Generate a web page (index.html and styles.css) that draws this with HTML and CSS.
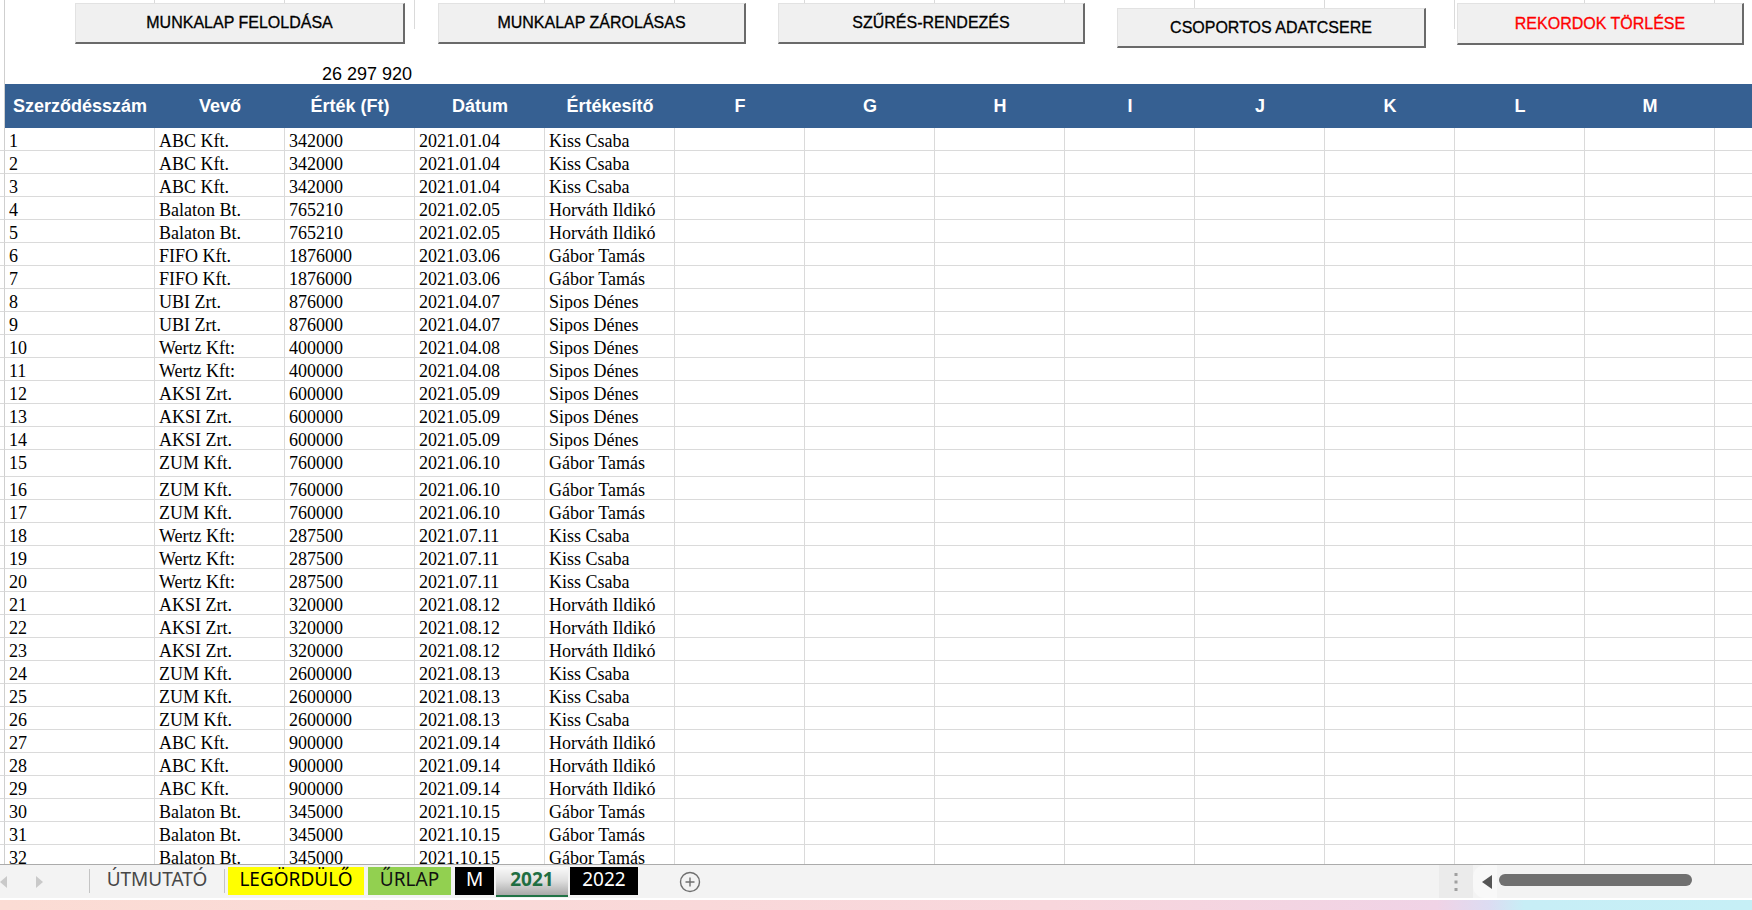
FILE: index.html
```html
<!DOCTYPE html>
<html>
  <head>
    <meta charset="UTF-8">
    <title>2021 - Szerződések</title>
    <link rel="stylesheet" href="styles.css">
  </head>
  <body>
    <div class="sheet">
      <!-- rows above the table -->
      <div class="top-row"><span class="gut"></span><span></span><span class="lines"></span></div>
      <div class="blank-row"><span class="gut"></span></div>
      <div class="sum-row"><span class="gut"></span><span></span><span></span><span class="sum">26 297 920</span></div>

      <div class="head">
        <span class="gut"></span>
        <span>Szerződésszám</span><span>Vevő</span><span>Érték (Ft)</span><span>Dátum</span><span>Értékesítő</span>
        <span>F</span><span>G</span><span>H</span><span>I</span><span>J</span><span>K</span><span>L</span><span>M</span><span></span>
      </div>

      <div class="row"><span class="gut"></span><span>1</span><span>ABC Kft.</span><span>342000</span><span>2021.01.04</span><span>Kiss Csaba</span><span class="rest"></span></div>
      <div class="row"><span class="gut"></span><span>2</span><span>ABC Kft.</span><span>342000</span><span>2021.01.04</span><span>Kiss Csaba</span><span class="rest"></span></div>
      <div class="row"><span class="gut"></span><span>3</span><span>ABC Kft.</span><span>342000</span><span>2021.01.04</span><span>Kiss Csaba</span><span class="rest"></span></div>
      <div class="row"><span class="gut"></span><span>4</span><span>Balaton Bt.</span><span>765210</span><span>2021.02.05</span><span>Horváth Ildikó</span><span class="rest"></span></div>
      <div class="row"><span class="gut"></span><span>5</span><span>Balaton Bt.</span><span>765210</span><span>2021.02.05</span><span>Horváth Ildikó</span><span class="rest"></span></div>
      <div class="row"><span class="gut"></span><span>6</span><span>FIFO Kft.</span><span>1876000</span><span>2021.03.06</span><span>Gábor Tamás</span><span class="rest"></span></div>
      <div class="row"><span class="gut"></span><span>7</span><span>FIFO Kft.</span><span>1876000</span><span>2021.03.06</span><span>Gábor Tamás</span><span class="rest"></span></div>
      <div class="row"><span class="gut"></span><span>8</span><span>UBI Zrt.</span><span>876000</span><span>2021.04.07</span><span>Sipos Dénes</span><span class="rest"></span></div>
      <div class="row"><span class="gut"></span><span>9</span><span>UBI Zrt.</span><span>876000</span><span>2021.04.07</span><span>Sipos Dénes</span><span class="rest"></span></div>
      <div class="row"><span class="gut"></span><span>10</span><span>Wertz Kft:</span><span>400000</span><span>2021.04.08</span><span>Sipos Dénes</span><span class="rest"></span></div>
      <div class="row"><span class="gut"></span><span>11</span><span>Wertz Kft:</span><span>400000</span><span>2021.04.08</span><span>Sipos Dénes</span><span class="rest"></span></div>
      <div class="row"><span class="gut"></span><span>12</span><span>AKSI Zrt.</span><span>600000</span><span>2021.05.09</span><span>Sipos Dénes</span><span class="rest"></span></div>
      <div class="row"><span class="gut"></span><span>13</span><span>AKSI Zrt.</span><span>600000</span><span>2021.05.09</span><span>Sipos Dénes</span><span class="rest"></span></div>
      <div class="row"><span class="gut"></span><span>14</span><span>AKSI Zrt.</span><span>600000</span><span>2021.05.09</span><span>Sipos Dénes</span><span class="rest"></span></div>
      <div class="row tall"><span class="gut"></span><span>15</span><span>ZUM Kft.</span><span>760000</span><span>2021.06.10</span><span>Gábor Tamás</span><span class="rest"></span></div>
      <div class="row"><span class="gut"></span><span>16</span><span>ZUM Kft.</span><span>760000</span><span>2021.06.10</span><span>Gábor Tamás</span><span class="rest"></span></div>
      <div class="row"><span class="gut"></span><span>17</span><span>ZUM Kft.</span><span>760000</span><span>2021.06.10</span><span>Gábor Tamás</span><span class="rest"></span></div>
      <div class="row"><span class="gut"></span><span>18</span><span>Wertz Kft:</span><span>287500</span><span>2021.07.11</span><span>Kiss Csaba</span><span class="rest"></span></div>
      <div class="row"><span class="gut"></span><span>19</span><span>Wertz Kft:</span><span>287500</span><span>2021.07.11</span><span>Kiss Csaba</span><span class="rest"></span></div>
      <div class="row"><span class="gut"></span><span>20</span><span>Wertz Kft:</span><span>287500</span><span>2021.07.11</span><span>Kiss Csaba</span><span class="rest"></span></div>
      <div class="row"><span class="gut"></span><span>21</span><span>AKSI Zrt.</span><span>320000</span><span>2021.08.12</span><span>Horváth Ildikó</span><span class="rest"></span></div>
      <div class="row"><span class="gut"></span><span>22</span><span>AKSI Zrt.</span><span>320000</span><span>2021.08.12</span><span>Horváth Ildikó</span><span class="rest"></span></div>
      <div class="row"><span class="gut"></span><span>23</span><span>AKSI Zrt.</span><span>320000</span><span>2021.08.12</span><span>Horváth Ildikó</span><span class="rest"></span></div>
      <div class="row"><span class="gut"></span><span>24</span><span>ZUM Kft.</span><span>2600000</span><span>2021.08.13</span><span>Kiss Csaba</span><span class="rest"></span></div>
      <div class="row"><span class="gut"></span><span>25</span><span>ZUM Kft.</span><span>2600000</span><span>2021.08.13</span><span>Kiss Csaba</span><span class="rest"></span></div>
      <div class="row"><span class="gut"></span><span>26</span><span>ZUM Kft.</span><span>2600000</span><span>2021.08.13</span><span>Kiss Csaba</span><span class="rest"></span></div>
      <div class="row"><span class="gut"></span><span>27</span><span>ABC Kft.</span><span>900000</span><span>2021.09.14</span><span>Horváth Ildikó</span><span class="rest"></span></div>
      <div class="row"><span class="gut"></span><span>28</span><span>ABC Kft.</span><span>900000</span><span>2021.09.14</span><span>Horváth Ildikó</span><span class="rest"></span></div>
      <div class="row"><span class="gut"></span><span>29</span><span>ABC Kft.</span><span>900000</span><span>2021.09.14</span><span>Horváth Ildikó</span><span class="rest"></span></div>
      <div class="row"><span class="gut"></span><span>30</span><span>Balaton Bt.</span><span>345000</span><span>2021.10.15</span><span>Gábor Tamás</span><span class="rest"></span></div>
      <div class="row"><span class="gut"></span><span>31</span><span>Balaton Bt.</span><span>345000</span><span>2021.10.15</span><span>Gábor Tamás</span><span class="rest"></span></div>
      <div class="row"><span class="gut"></span><span>32</span><span>Balaton Bt.</span><span>345000</span><span>2021.10.15</span><span>Gábor Tamás</span><span class="rest"></span></div>

      <!-- macro buttons float over the sheet -->
      <div class="btn btn-unlock">MUNKALAP FELOLDÁSA</div>
      <div class="btn btn-lock">MUNKALAP ZÁROLÁSAS</div>
      <div class="btn btn-filter">SZŰRÉS-RENDEZÉS</div>
      <div class="btn btn-group">CSOPORTOS ADATCSERE</div>
      <div class="btn btn-delete">REKORDOK TÖRLÉSE</div>
    </div>

    <div class="tabs">
      <div class="nav">
        <svg width="8" height="12" viewBox="0 0 8 12"><polygon points="7,0 0,6 7,12" fill="#c9c9c9"/></svg>
        <svg class="next" width="8" height="12" viewBox="0 0 8 12"><polygon points="1,0 8,6 1,12" fill="#c9c9c9"/></svg>
      </div>
      <span class="sep"></span>
      <div class="tab tab-guide">ÚTMUTATÓ</div>
      <span class="sep"></span>
      <div class="tab tab-yellow">LEGÖRDÜLŐ</div>
      <div class="tab tab-green">ŰRLAP</div>
      <div class="tab tab-black tab-m">M</div>
      <div class="tab tab-active">2021</div>
      <div class="tab tab-black tab-2022">2022</div>
      <svg class="add" width="22" height="22" viewBox="0 0 22 22">
        <circle cx="11" cy="11" r="9.5" fill="none" stroke="#6f6f6f" stroke-width="1.4"/>
        <path d="M11 6.5v9M6.5 11h9" stroke="#6f6f6f" stroke-width="1.4"/>
      </svg>
      <div class="spacer"></div>
      <div class="dots">
        <svg width="4" height="18" viewBox="0 0 4 18"><rect x="0.5" y="0" width="3" height="3" fill="#a0a0a0"/><rect x="0.5" y="7.5" width="3" height="3" fill="#a0a0a0"/><rect x="0.5" y="15" width="3" height="3" fill="#a0a0a0"/></svg>
      </div>
      <div class="scroll-left">
        <svg width="11" height="14" viewBox="0 0 11 14"><polygon points="10,0 0,7 10,14" fill="#555"/></svg>
      </div>
      <div class="thumb"></div>
    </div>
    <div class="desk"></div>
  </body>
</html>
```

FILE: styles.css
```css
/* page frame */
* {
  box-sizing: border-box;
}

body {
  margin: 0;
  width: 1752px;
  height: 910px;
  overflow: hidden;
  background-color: #fff;
  font-family: "Liberation Serif", "Times New Roman", serif;
  color: #000;
}

/* Worksheet */
.sheet {
  position: relative;
  height: 864px;
  overflow: hidden;
}

.gut {
  border-right: 1px solid #cfcfcf;
}

.top-row {
  display: grid;
  grid-template-columns: 5px 20px 1fr;
  height: 29px;
}

.top-row .lines {
  background: repeating-linear-gradient(to right, transparent 0 129px, #dadada 129px 130px);
}

.blank-row {
  display: grid;
  grid-template-columns: 5px 1fr;
  height: 29px;
}

.sum-row {
  display: grid;
  grid-template-columns: 5px 150px 130px 130px 1fr;
  height: 26px;
}

.sum {
  align-self: end;
  text-align: right;
  padding-right: 3px;
  font: 18px/20px "Liberation Sans", Arial, sans-serif;
}

/* Table header band */
.head {
  display: grid;
  grid-template-columns: 5px 150px repeat(12, 130px) 1fr;
  height: 44px;
}

.head span {
  background-color: #366092;
  color: #fff;
  font: bold 18px/44px "Liberation Sans", Arial, sans-serif;
  text-align: center;
  white-space: nowrap;
}

.head .gut {
  background: none;
}

/* Data rows */
.row {
  display: grid;
  grid-template-columns: 5px 150px 130px 130px 130px 130px 1fr;
  height: 23px;
  font-size: 18px;
  line-height: 18px;
}

.row.tall {
  height: 27px;
}

.row span {
  border-right: 1px solid #dadada;
  border-bottom: 1px solid #dadada;
  padding: 4px 0 0 4px;
  white-space: nowrap;
  overflow: hidden;
}

.row .gut {
  border-right-color: #cfcfcf;
  padding: 0;
}

.row .rest {
  border-right: none;
  padding: 0;
  background: repeating-linear-gradient(to right, transparent 0 129px, #dadada 129px 130px);
}

/* Macro buttons */
.btn {
  position: absolute;
  top: 3px;
  height: 41px;
  display: flex;
  align-items: center;
  justify-content: center;
  background-color: #f0f0f0;
  border-top: 1px solid #e2e2e2;
  border-left: 1px solid #e2e2e2;
  border-right: 2px solid #6a6a6a;
  border-bottom: 2px solid #6a6a6a;
  font: 16px "Liberation Sans", Arial, sans-serif;
  -webkit-text-stroke: 0.3px;
  color: #000;
  white-space: nowrap;
}

.btn-unlock {
  left: 75px;
  width: 330px;
}

.btn-lock {
  left: 438px;
  width: 308px;
}

.btn-filter {
  left: 778px;
  width: 307px;
}

.btn-group {
  top: 8px;
  left: 1117px;
  width: 309px;
  height: 40px;
}

.btn-delete {
  left: 1457px;
  width: 287px;
  height: 42px;
  color: #f00;
}

/* Sheet tabs */
.tabs {
  display: flex;
  align-items: flex-start;
  height: 34px;
  background-color: #f3f3f3;
  border-top: 1px solid #ababab;
  font-family: "Noto Sans", "Open Sans", sans-serif;
  font-size: 19px;
}

.nav {
  display: flex;
  align-items: center;
  width: 89px;
  height: 100%;
}

.nav .next {
  margin-left: 27px;
}

.sep {
  width: 1px;
  height: 24px;
  margin-top: 4px;
  background-color: #c4c4c4;
}

.tab {
  height: 28px;
  margin-top: 2px;
  line-height: 24px;
  text-align: center;
  white-space: nowrap;
}

.tab-guide {
  width: 134px;
  color: #474747;
}

.tab-yellow {
  width: 136px;
  margin-left: 3px;
  background-color: #ffff00;
}

.tab-green {
  width: 83px;
  margin-left: 4px;
  background-color: #92d050;
  color: #111;
}

.tab-black {
  background-color: #000;
  color: #fff;
}

.tab-m {
  width: 39px;
  margin-left: 4px;
}

.tab-active {
  width: 72px;
  margin-left: 2px;
  height: 30px;
  background: linear-gradient(to bottom, #fafafa 0%, #dedede 50%, #a9a9a9 100%);
  border-bottom: 2px solid #217346;
  color: #1f6e42;
  font-weight: bold;
}

.tab-2022 {
  width: 68px;
  margin-left: 2px;
}

.add {
  margin: 6px 0 0 41px;
}

.spacer {
  flex: 1;
}

.dots {
  display: flex;
  align-items: center;
  justify-content: center;
  width: 34px;
  height: 100%;
  background-color: #ebebeb;
}

.scroll-left {
  display: flex;
  align-items: center;
  justify-content: flex-end;
  width: 24px;
  height: 100%;
  padding-right: 4px;
  background-color: #f8f8f8;
  border-radius: 12px 0 0 12px;
}

.thumb {
  width: 193px;
  height: 12px;
  margin: 9px 60px 0 2px;
  background-color: #707070;
  border-radius: 6px;
}

/* desktop strip under the window */
.desk {
  height: 12px;
  border-top: 2px solid #fff;
  background: linear-gradient(to right, #fbdcd4 0%, #f8d6dc 60%, #f0d3e6 82%, #dcdcf2 85%, #c7eef6 87%, #c6eff6 100%);
}
```
